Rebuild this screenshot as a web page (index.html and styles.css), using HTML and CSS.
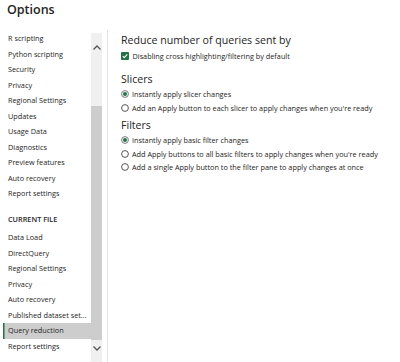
FILE: index.html
```html
<!DOCTYPE html>
<html lang="en">
<head>
  <meta charset="UTF-8" />
  <meta name="viewport" content="width=device-width, initial-scale=1.0"/>
  <title>Options</title>
  <link rel="stylesheet" href="styles.css">
</head>
<body>

  <h1 class="title">Options</h1>

  <div class="main">
    <div class="sidebar">
      <ul class="nav">
        <li>R scripting</li>
        <li>Python scripting</li>
        <li>Security</li>
        <li>Privacy</li>
        <li>Regional Settings</li>
        <li>Updates</li>
        <li>Usage Data</li>
        <li>Diagnostics</li>
        <li>Preview features</li>
        <li>Auto recovery</li>
        <li>Report settings</li>
        <li class="nav-head">CURRENT FILE</li>
        <li>Data Load</li>
        <li>DirectQuery</li>
        <li>Regional Settings</li>
        <li>Privacy</li>
        <li>Auto recovery</li>
        <li>Published dataset set...</li>
        <li class="active">Query reduction</li>
        <li>Report settings</li>
      </ul>

      <div class="scrollbar">
        <div class="arrow up">
          <svg width="8" height="5" viewBox="0 0 8 5"><path d="M0.5 4.5 L4 1 L7.5 4.5" fill="none" stroke="#555" stroke-width="1.3"/></svg>
        </div>
        <div class="thumb"></div>
        <div class="arrow down">
          <svg width="8" height="5" viewBox="0 0 8 5"><path d="M0.5 0.5 L4 4 L7.5 0.5" fill="none" stroke="#555" stroke-width="1.3"/></svg>
        </div>
      </div>
    </div>

    <div class="content">
      <section class="group first">
        <h2>Reduce number of queries sent by</h2>
        <label class="option">
          <svg class="box" width="8" height="8" viewBox="0 0 8 8"><rect width="8" height="8" rx="1" fill="#217346"/><path d="M1.8 4.1 L3.3 5.6 L6.3 2.4" fill="none" stroke="#fff" stroke-width="1.1"/></svg>
          Disabling cross highlighting/filtering by default
        </label>
      </section>

      <section class="group">
        <h2>Slicers</h2>
        <label class="option">
          <svg class="radio" width="8" height="8" viewBox="0 0 8 8"><circle cx="4" cy="4" r="3.4" fill="#fff" stroke="#6b6b6b" stroke-width="0.9"/><circle cx="4" cy="4" r="2" fill="#217346"/></svg>
          Instantly apply slicer changes
        </label>
        <label class="option">
          <svg class="radio" width="8" height="8" viewBox="0 0 8 8"><circle cx="4" cy="4" r="3.4" fill="#fff" stroke="#444" stroke-width="0.9"/></svg>
          Add an Apply button to each slicer to apply changes when you're ready
        </label>
      </section>

      <section class="group">
        <h2>Filters</h2>
        <label class="option">
          <svg class="radio" width="8" height="8" viewBox="0 0 8 8"><circle cx="4" cy="4" r="3.4" fill="#fff" stroke="#6b6b6b" stroke-width="0.9"/><circle cx="4" cy="4" r="2" fill="#217346"/></svg>
          Instantly apply basic filter changes
        </label>
        <label class="option">
          <svg class="radio" width="8" height="8" viewBox="0 0 8 8"><circle cx="4" cy="4" r="3.4" fill="#fff" stroke="#444" stroke-width="0.9"/></svg>
          Add Apply buttons to all basic filters to apply changes when you're ready
        </label>
        <label class="option">
          <svg class="radio" width="8" height="8" viewBox="0 0 8 8"><circle cx="4" cy="4" r="3.4" fill="#fff" stroke="#444" stroke-width="0.9"/></svg>
          Add a single Apply button to the filter pane to apply changes at once
        </label>
      </section>
    </div>
  </div>

</body>
</html>
```

FILE: styles.css
```css
* {
  box-sizing: border-box;
  margin: 0;
  padding: 0;
}

html, body {
  height: 100%;
  overflow: hidden;
}

body {
  background-color: white;
  color: #252423;
  font-family: "Open Sans", sans-serif;
}

.title {
  font-size: 12.5px;
  font-weight: 600;
  line-height: 20px;
  padding-left: 7px;
  height: 30px;
}

.main {
  display: flex;
  height: 332px;
}

.sidebar {
  display: flex;
  width: 108px;
  border-right: 1px solid #e3e3e3;
}

.nav {
  list-style: none;
  width: 91px;
  padding: 1px 0 0 3px;
  font-size: 7.3px;
}

.nav li {
  height: 15.5px;
  line-height: 15.5px;
  padding-left: 5px;
  white-space: nowrap;
  overflow: hidden;
}

.nav li.nav-head {
  height: 28.5px;
  line-height: 15px;
  padding-top: 10px;
  font-weight: 600;
}

.nav li.active {
  background-color: #cdcdcd;
  box-shadow: inset 1.5px 0 #217346;
}

.scrollbar {
  width: 11px;
  margin-top: 3px;
  background-color: #f0f0f0;
  display: flex;
  flex-direction: column;
  align-items: center;
}

.arrow {
  display: flex;
  justify-content: center;
  align-items: center;
}

.arrow.up {
  height: 28px;
}

.arrow.down {
  height: 16px;
}

.thumb {
  width: 100%;
  height: 234px;
  margin-top: 45px;
  background-color: #cdcdcd;
}

.content {
  flex: 1;
  padding: 2px 0 0 13px;
}

.group {
  margin-bottom: 2px;
}

.group.first {
  margin-bottom: 8px;
}

h2 {
  font-size: 10.6px;
  font-weight: 400;
  line-height: 16px;
  margin-bottom: 1px;
}

.option {
  display: flex;
  align-items: center;
  gap: 3px;
  height: 13.5px;
  font-size: 7.3px;
  white-space: nowrap;
}

.option .box {
  margin-right: 0.5px;
}
```
